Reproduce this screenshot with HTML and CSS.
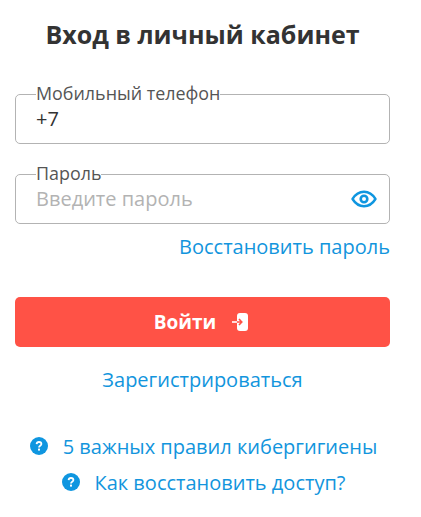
FILE: index.html
```html
<!DOCTYPE html>
<html lang="ru">
<head>
<meta charset="utf-8">
<title>Вход в личный кабинет</title>
<link rel="stylesheet" href="styles.css">
</head>
<body>
<main class="page">
  <h1 class="title">Вход в личный кабинет</h1>
  <form class="form">
    <fieldset class="field">
      <legend class="field-label">Мобильный телефон</legend>
      <div class="field-row"><span class="field-value">+7</span></div>
    </fieldset>
    <fieldset class="field field-second">
      <legend class="field-label">Пароль</legend>
      <div class="field-row">
        <span class="field-placeholder">Введите пароль</span>
        <svg class="eye" viewBox="0 0 26 18" width="26" height="18" aria-hidden="true">
          <path d="M1.500 9C4.500 4.200 8.400 1.800 13 1.800S21.500 4.200 24.500 9C21.500 13.800 17.600 16.200 13 16.200S4.500 13.800 1.500 9Z" fill="none" stroke="#0f96e0" stroke-width="2.400" stroke-linejoin="round"/>
          <circle cx="13" cy="9" r="3.300" fill="none" stroke="#0f96e0" stroke-width="2.600"/>
        </svg>
      </div>
    </fieldset>
    <div class="restore"><a class="link" href="#">Восстановить пароль</a></div>
    <button class="submit" type="button">
      <span>Войти</span>
      <svg class="enter" viewBox="0 0 18 18" width="18" height="18" aria-hidden="true">
        <rect x="6" y="0" width="11" height="18" rx="3" fill="#fff"/>
        <path d="M1 9H6" fill="none" stroke="#fff" stroke-width="1.600"/>
        <path d="M6 9H10.500M8 6L10.800 9L8 12" fill="none" stroke="#ff5246" stroke-width="1.600"/>
      </svg>
    </button>
    <div class="register"><a class="link" href="#">Зарегистрироваться</a></div>
  </form>
  <ul class="help">
    <li class="help-item">
      <svg class="q" viewBox="0 0 18 18" width="18" height="18" aria-hidden="true"><circle cx="9" cy="9" r="9" fill="#0f96e0"/><path d="M6.600 7.100C6.700 5.700 7.700 5 9 5C10.400 5 11.400 5.800 11.400 7C11.400 8.800 9 8.700 9 10.400" fill="none" stroke="#fff" stroke-width="1.800"/><rect x="8" y="11.600" width="2" height="2" fill="#fff"/></svg>
      <a class="link" href="#">5 важных правил кибергигиены</a>
    </li>
    <li class="help-item">
      <svg class="q" viewBox="0 0 18 18" width="18" height="18" aria-hidden="true"><circle cx="9" cy="9" r="9" fill="#0f96e0"/><path d="M6.600 7.100C6.700 5.700 7.700 5 9 5C10.400 5 11.400 5.800 11.400 7C11.400 8.800 9 8.700 9 10.400" fill="none" stroke="#fff" stroke-width="1.800"/><rect x="8" y="11.600" width="2" height="2" fill="#fff"/></svg>
      <a class="link" href="#">Как восстановить доступ?</a>
    </li>
  </ul>
</main>
</body>
</html>
```
FILE: styles.css
```css
* { box-sizing: border-box; }
html, body { margin: 0; padding: 0; background: #fff; }
body { font-family: "Open Sans", sans-serif; color: #333; }
.page { width: 405px; padding: 0 15px; }
.title {
  margin: 0;
  padding-top: 18px;
  font-size: 25px;
  line-height: 33px;
  font-weight: 700;
  text-align: center;
  color: #333;
  white-space: nowrap;
}
.form { margin-top: 32px; }
.field {
  margin: 0;
  padding: 0 20px;
  height: 61px;
  border: 1px solid #b3b3b3;
  border-radius: 5px;
  min-width: 0;
}
.field-second { margin-top: 19px; }
.field-label {
  padding: 0 0 2px;
  font-size: 17.9px;
  line-height: 20px;
  color: #555;
}
.field-row {
  display: flex;
  align-items: center;
  justify-content: space-between;
  height: 30px;
  margin-top: -2px;
}
.field-value { font-size: 20px; color: #333; }
.field-placeholder { font-size: 20px; color: #b3b3b3; }
.eye { margin-right: -8px; margin-top: 1px; }
.restore { text-align: right; margin-top: 9px; line-height: 27px; }
.link { color: #1295dd; font-size: 20px; text-decoration: none; }
.submit {
  display: flex;
  align-items: center;
  justify-content: center;
  gap: 15px;
  width: 100%;
  height: 50px;
  margin-top: 35px;
  padding: 0 8px 0 6px;
  border: 0;
  border-radius: 5px;
  background: #ff5246;
  color: #fff;
  font: 700 19px "Open Sans", sans-serif;
}
.register { text-align: center; margin-top: 19px; line-height: 27px; }
.help { list-style: none; margin: 33px 0 0; padding: 0 0 0 2px; }
.help-item { display: flex; align-items: center; justify-content: center; gap: 15px; height: 36px; }
```
